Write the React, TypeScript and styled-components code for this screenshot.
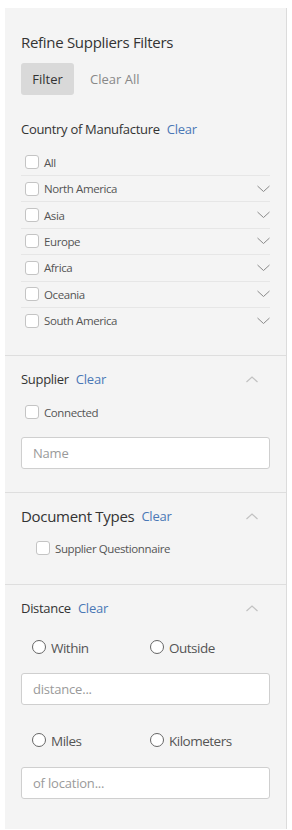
import * as React from "react";
import styled, { createGlobalStyle } from "styled-components";

const GlobalStyle = createGlobalStyle`
  body {
    margin: 0;
    background: #fff;
    font-family: "Open Sans", "Noto Sans", sans-serif;
    color: #444;
  }
  * {
    box-sizing: border-box;
  }
`;

const Panel = styled.aside`
  width: 282px;
  height: 821px;
  margin: 8px 0 0 5px;
  background-color: #f4f4f4;
  border-right: 1px solid #dcdcdc;
  display: flex;
  flex-direction: column;
`;
const Section = styled.section<{ $top: number; $bottom: number; $last?: boolean }>`
  padding: ${(p) => p.$top}px 16px ${(p) => p.$bottom}px;
  border-bottom: ${(p) => (p.$last ? "none" : "1px solid #dedede")};
`;
const Title = styled.h2`
  margin: 0 0 10px;
  font-size: 15px;
  line-height: 22px;
  font-weight: normal;
  letter-spacing: -0.3px;
  color: #333;
`;
const Actions = styled.div`
  display: flex;
  align-items: center;
  gap: 16px;
`;
const FilterButton = styled.button`
  width: 53px;
  height: 32px;
  border: none;
  border-radius: 3px;
  background-color: #d9d9d9;
  color: #333;
  font-family: inherit;
  font-size: 13px;
  padding: 0;
`;
const ClearAll = styled.span`
  font-size: 13px;
  color: #888;
`;
const Header = styled.div<{ $mt?: number; $big?: boolean }>`
  display: flex;
  align-items: center;
  margin-top: ${(p) => p.$mt || 0}px;
  height: ${(p) => (p.$big ? 22 : 20)}px;
`;
const HeaderLabel = styled.span<{ $big?: boolean }>`
  font-size: ${(p) => (p.$big ? 15 : 13)}px;
  letter-spacing: -0.3px;
  color: #333;
`;
const ClearLink = styled.a`
  margin-left: 7px;
  font-size: 13px;
  letter-spacing: -0.2px;
  color: #4a78b6;
  cursor: pointer;
`;
const Toggle = styled.span`
  margin-left: auto;
  margin-right: 12px;
  display: flex;
`;
const List = styled.ul`
  list-style: none;
  margin: 10px 0 0;
  padding: 0;
`;
const Row = styled.li<{ $first?: boolean }>`
  display: flex;
  align-items: center;
  height: ${(p) => (p.$first ? 26 : 26.4)}px;
  border-top: ${(p) => (p.$first ? "none" : "1px solid #e6e6e6")};
`;
const CheckLabel = styled.label<{ $indent?: number; $mt?: number }>`
  display: flex;
  align-items: center;
  gap: 5px;
  height: 20px;
  margin-top: ${(p) => p.$mt || 0}px;
  padding-left: ${(p) => p.$indent ?? 4}px;
  font-size: 11.5px;
  letter-spacing: -0.4px;
  color: #555;
`;
const Box = styled.span`
  width: 14px;
  height: 14px;
  border: 1px solid #c4c4c4;
  border-radius: 3px;
  background: #fff;
`;
const Expand = styled.span`
  margin-left: auto;
  display: flex;
`;
const TextInput = styled.input<{ $mt: number }>`
  display: block;
  width: 100%;
  height: 32px;
  margin-top: ${(p) => p.$mt}px;
  padding: 0 11px;
  border: 1px solid #cfcfcf;
  border-radius: 3px;
  background: #fff;
  font-family: inherit;
  font-size: 13px;
  letter-spacing: -0.2px;
  color: #333;
  &::placeholder {
    color: #9a9a9a;
  }
`;
const RadioRow = styled.div<{ $mt: number }>`
  display: grid;
  grid-template-columns: 118px 1fr;
  margin-top: ${(p) => p.$mt}px;
  padding-left: 11px;
  height: 20px;
`;
const RadioLabel = styled.label`
  display: flex;
  align-items: center;
  gap: 5px;
  font-size: 13.5px;
  letter-spacing: -0.5px;
  color: #555;
`;
const Circle = styled.span`
  width: 14px;
  height: 14px;
  border: 1px solid #666;
  border-radius: 50%;
  background: #fff;
  margin-top: -3px;
`;

const ChevronDown = () => (
  <svg width="13" height="8" viewBox="0 0 13 8">
    <path d="M0.5 1 L6.5 6.5 L12.5 1" fill="none" stroke="#8a8a8a" strokeWidth="1" />
  </svg>
);
const ChevronUp = () => (
  <svg width="12" height="7" viewBox="0 0 12 7">
    <path d="M0.5 6 L6 1 L11.5 6" fill="none" stroke="#c2c2c2" strokeWidth="1.2" />
  </svg>
);

const regions = [
  "North America",
  "Asia",
  "Europe",
  "Africa",
  "Oceania",
  "South America",
];

const Check: React.FC<{ label: string; indent?: number; mt?: number }> = ({
  label,
  indent,
  mt,
}) => (
  <CheckLabel $indent={indent} $mt={mt}>
    <Box />
    {label}
  </CheckLabel>
);

const Radio: React.FC<{ label: string }> = ({ label }) => (
  <RadioLabel>
    <Circle />
    {label}
  </RadioLabel>
);

const App: React.FC = () => {
  return (
    <>
      <GlobalStyle />
      <Panel>
        <Section $top={23} $bottom={22}>
          <Title>Refine Suppliers Filters</Title>
          <Actions>
            <FilterButton>Filter</FilterButton>
            <ClearAll>Clear All</ClearAll>
          </Actions>
          <Header $mt={24}>
            <HeaderLabel>Country of Manufacture</HeaderLabel>
            <ClearLink>Clear</ClearLink>
          </Header>
          <List>
            <Row $first>
              <Check label="All" />
            </Row>
            {regions.map((r) => (
              <Row key={r}>
                <Check label={r} />
                <Expand>
                  <ChevronDown />
                </Expand>
              </Row>
            ))}
          </List>
        </Section>

        <Section $top={13} $bottom={23}>
          <Header>
            <HeaderLabel>Supplier</HeaderLabel>
            <ClearLink>Clear</ClearLink>
            <Toggle>
              <ChevronUp />
            </Toggle>
          </Header>
          <Check label="Connected" mt={13} />
          <TextInput $mt={15} placeholder="Name" />
        </Section>

        <Section $top={12} $bottom={26}>
          <Header $big>
            <HeaderLabel $big>Document Types</HeaderLabel>
            <ClearLink>Clear</ClearLink>
            <Toggle>
              <ChevronUp />
            </Toggle>
          </Header>
          <Check label="Supplier Questionnaire" indent={15} mt={11} />
        </Section>

        <Section $top={13} $bottom={29} $last>
          <Header>
            <HeaderLabel>Distance</HeaderLabel>
            <ClearLink>Clear</ClearLink>
            <Toggle>
              <ChevronUp />
            </Toggle>
          </Header>
          <RadioRow $mt={20}>
            <Radio label="Within" />
            <Radio label="Outside" />
          </RadioRow>
          <TextInput $mt={15} placeholder="distance..." />
          <RadioRow $mt={26}>
            <Radio label="Miles" />
            <Radio label="Kilometers" />
          </RadioRow>
          <TextInput $mt={16} placeholder="of location..." />
        </Section>
      </Panel>
    </>
  );
};

export default App;
